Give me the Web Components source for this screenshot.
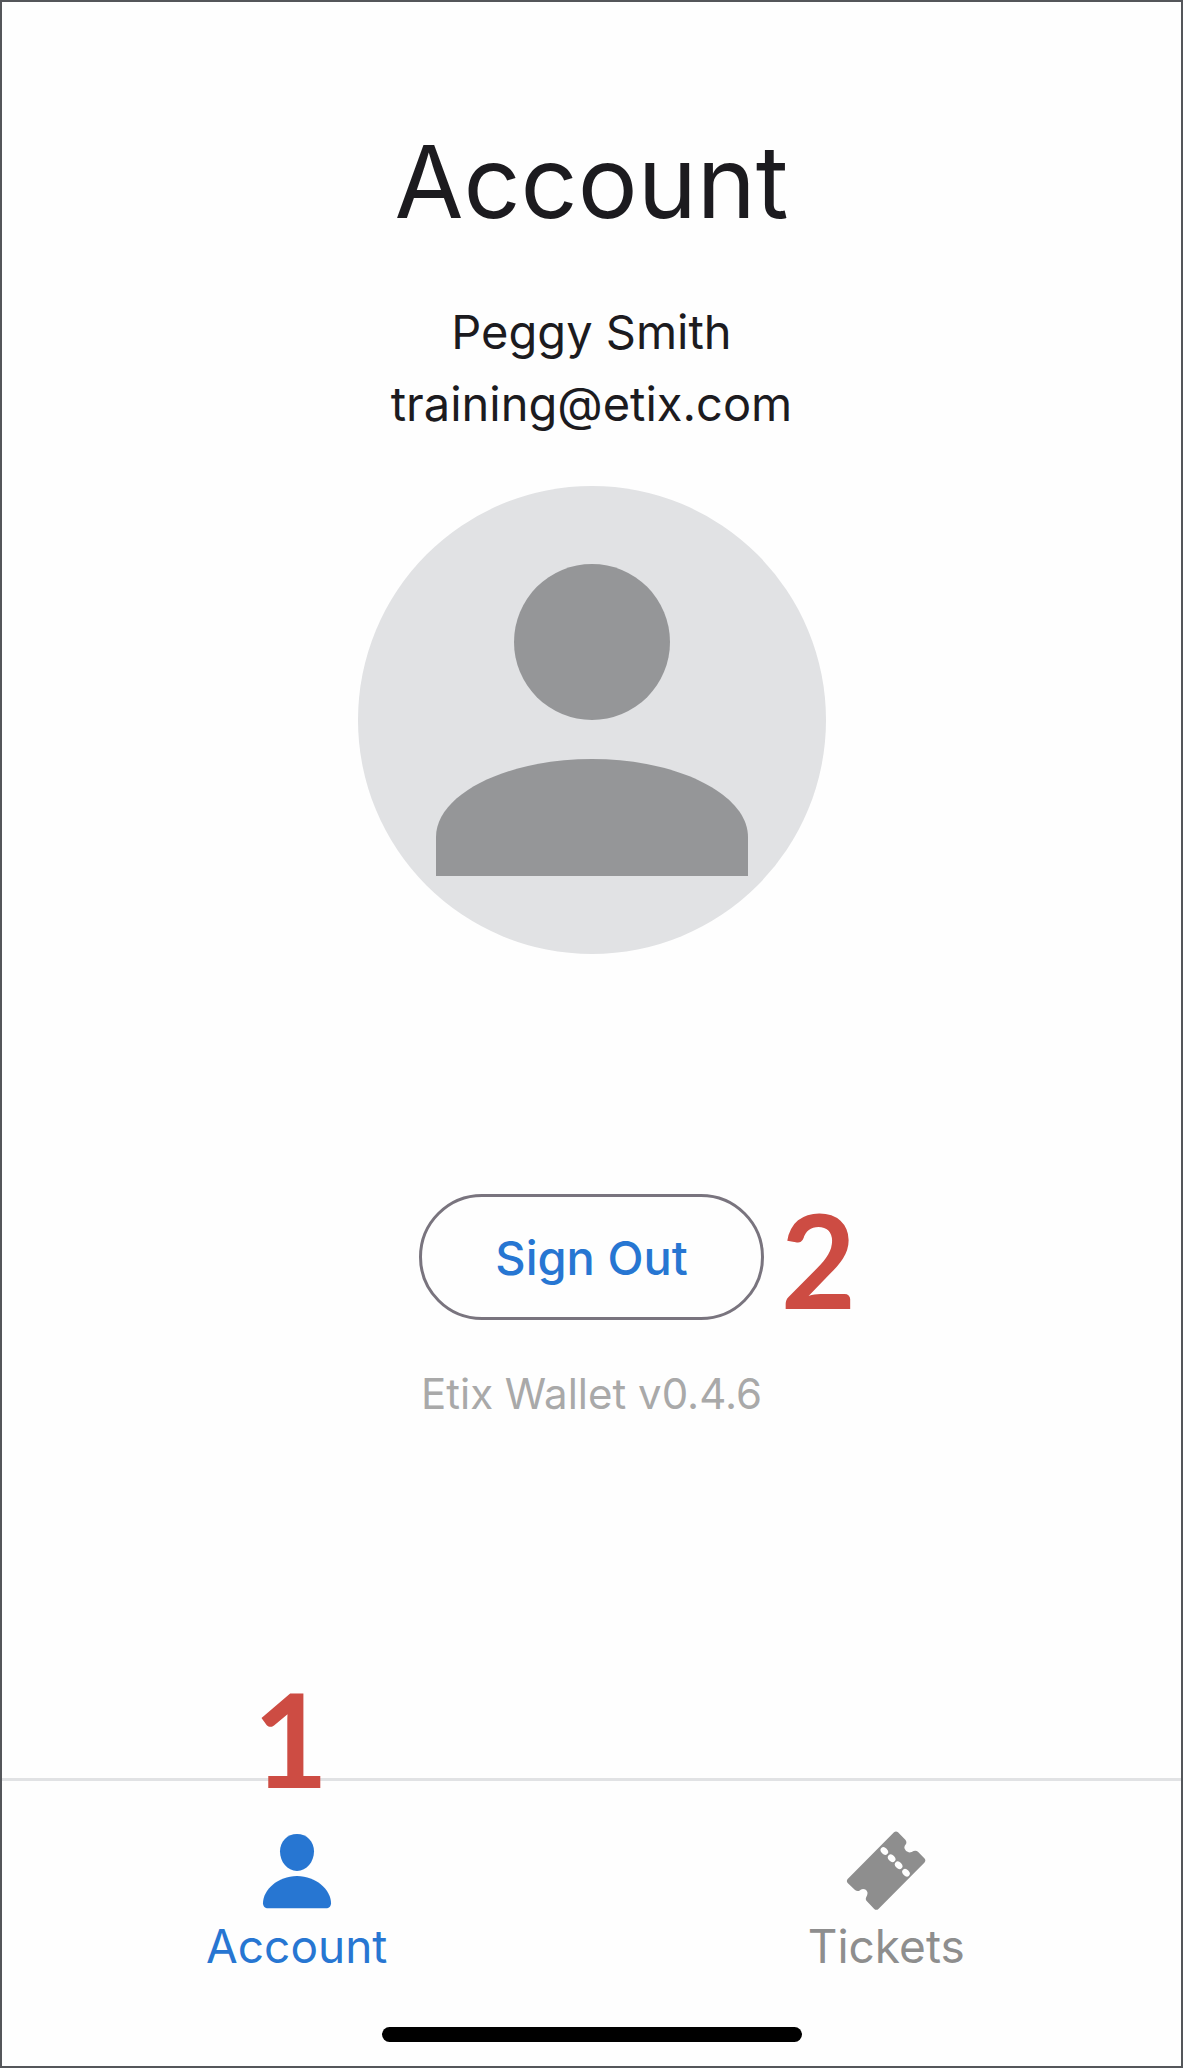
<!DOCTYPE html>
<html lang="en">
<head>
<meta charset="utf-8">
<meta name="viewport" content="width=device-width, initial-scale=1">
<title>Account</title>
<style>
body {
    margin: 0;
    font-family: Inter, Roboto, sans-serif;
    color: #1c1b1f;
    background: #fefefe;
}
</style>
</head>
<body>

<wallet-screen>
    <account-profile name="Peggy Smith" email="training@etix.com"></account-profile>
    <sign-out-button slot="actions">Sign Out<step-mark slot="mark">2</step-mark></sign-out-button>
    <span slot="version">Etix Wallet v0.4.6</span>
    <tab-bar slot="footer">
        <tab-item href="#account" icon="person" active>Account<step-mark slot="mark">1</step-mark></tab-item>
        <tab-item href="#tickets" icon="ticket">Tickets</tab-item>
    </tab-bar>
</wallet-screen>

<template id="wallet-screen">
<style>
:host {
    display: flex;
    flex-direction: column;
    box-sizing: border-box;
    min-height: 100vh;
    border: 2px solid #54565a;
}

main {
    flex: 1;
    display: flex;
    flex-direction: column;
    align-items: center;
    padding: 116px 24px 48px;
}

.actions {
    margin-top: 240px;
}

.version {
    margin: 44px 0 0;
    font-size: 42px;
    line-height: 60px;
    color: #a9a9a9;
}
</style>
<main>
    <slot></slot>
    <div class="actions"><slot name="actions"></slot></div>
    <p class="version"><slot name="version"></slot></p>
</main>
<slot name="footer"></slot>
</template>

<template id="account-profile">
<style>
:host {
    display: flex;
    flex-direction: column;
    align-items: center;
    text-align: center;
}

h1 {
    margin: 0 0 50px;
    font-size: 100px;
    font-weight: 400;
    line-height: 128px;
}

p {
    margin: 0;
    font-size: 47px;
    line-height: 72px;
}

svg {
    display: block;
    width: 468px;
    height: 468px;
    margin-top: 46px;
}
</style>
<h1>Account</h1>
<p class="name"></p>
<p class="email"></p>
<svg viewBox="0 0 468 468" aria-hidden="true">
    <circle cx="234" cy="234" r="234" fill="#e1e2e4"/>
    <g fill="#959698">
        <circle cx="234" cy="156" r="78"/>
        <path d="M78 390v-39c0-43 71-78 156-78s156 35 156 78v39z"/>
    </g>
</svg>
</template>

<template id="sign-out-button">
<style>
:host {
    display: block;
    position: relative;
}

button {
    display: block;
    height: 126px;
    padding: 0 73px;
    border: 3px solid #79747e;
    border-radius: 63px;
    background: none;
    color: #2776d2;
    font: 500 47px Inter, Roboto, sans-serif;
    cursor: pointer;
}

/* step number sits beside the button */
.mark {
    position: absolute;
    top: 0;
    left: 100%;
    padding-left: 17px;
}
</style>
<button type="button"><slot></slot></button>
<div class="mark"><slot name="mark"></slot></div>
</template>

<template id="step-mark">
<style>
:host {
    display: block;
    font: 700 130px/130px Lato, sans-serif;
    color: #cd4c43;
}
</style>
<slot></slot>
</template>

<template id="tab-bar">
<style>
:host {
    display: block;
    border-top: 3px solid #e1e2e4;
}

nav {
    display: grid;
    grid-template-columns: 1fr 1fr;
}

.home {
    width: 420px;
    height: 15px;
    margin: 46px auto 24px;
    border-radius: 8px;
    background: #000;
}
</style>
<nav><slot></slot></nav>
<div class="home"></div>
</template>

<template id="tab-item">
<style>
:host {
    display: block;
    position: relative;
    color: #8e8e8e;
}

:host([active]) {
    color: #2776d2;
}

a {
    display: flex;
    flex-direction: column;
    align-items: center;
    padding-top: 50px;
    color: inherit;
    font-size: 46px;
    line-height: 70px;
    text-decoration: none;
}

svg {
    display: block;
    width: 80px;
    height: 80px;
    fill: currentColor;
}

/* step number stands on the bar's top line */
.mark {
    position: absolute;
    bottom: 100%;
    left: 50%;
    transform: translateX(-50%);
    margin-bottom: -22px;
    padding-right: 12px;
}
</style>
<a><svg viewBox="0 0 240 240" aria-hidden="true"></svg><span><slot></slot></span></a>
<div class="mark"><slot name="mark"></slot></div>
</template>

<script>
const icons = {
    person: `
        <path d="M120 9c29 0 51 22 51 52 0 32-22 59-51 59s-51-27-51-59c0-30 22-52 51-52z"/>
        <path d="M33 232c-9 0-15-6-15-15 0-40 44-82 102-82s102 42 102 82c0 9-6 15-15 15z"/>`,
    ticket: `
        <path fill-rule="evenodd" d="M144 4q6-5 12 0l22 22q5 5 2 13-7 7-4 14 3 9 12 11 8 1 15-4 8-2 13 2l19 20q6 6 0 13L98 233q-7 7-14 0l-22-23q-4-4-2-10 6-9 4-17-3-9-13-9-6 0-11 5-7 2-13-2L5 156q-5-6 0-12z
        M106 51a9 12-45 1 0 18 18 9 12-45 1 0-18-18z
        M128 73a9 12-45 1 0 18 18 9 12-45 1 0-18-18z
        M149 94a9 12-45 1 0 18 18 9 12-45 1 0-18-18z
        M171 116a9 12-45 1 0 18 18 9 12-45 1 0-18-18z"/>`
};

function stamp(host, id) {
    const root = host.attachShadow({mode: 'open'});
    root.appendChild(document.getElementById(id).content.cloneNode(true));
    return root;
}

class WalletScreen extends HTMLElement {
    constructor() {
        super();
        stamp(this, 'wallet-screen');
    }
}

class AccountProfile extends HTMLElement {
    constructor() {
        super();
        const root = stamp(this, 'account-profile');
        root.querySelector('.name').textContent = this.getAttribute('name');
        root.querySelector('.email').textContent = this.getAttribute('email');
    }
}

class SignOutButton extends HTMLElement {
    constructor() {
        super();
        stamp(this, 'sign-out-button');
    }
}

class StepMark extends HTMLElement {
    constructor() {
        super();
        stamp(this, 'step-mark');
    }
}

class TabBar extends HTMLElement {
    constructor() {
        super();
        stamp(this, 'tab-bar');
        this.addEventListener('click', (e) => this.select(e.target.closest('tab-item')));
    }

    select(item) {
        if (!item) return;
        this.querySelectorAll('tab-item').forEach((tab) => {
            tab.toggleAttribute('active', tab === item);
        });
    }
}

class TabItem extends HTMLElement {
    constructor() {
        super();
        const root = stamp(this, 'tab-item');
        root.querySelector('a').href = this.getAttribute('href');
        root.querySelector('svg').innerHTML = icons[this.getAttribute('icon')];
    }
}

customElements.define('wallet-screen', WalletScreen);
customElements.define('account-profile', AccountProfile);
customElements.define('sign-out-button', SignOutButton);
customElements.define('step-mark', StepMark);
customElements.define('tab-bar', TabBar);
customElements.define('tab-item', TabItem);
</script>
</body>
</html>
